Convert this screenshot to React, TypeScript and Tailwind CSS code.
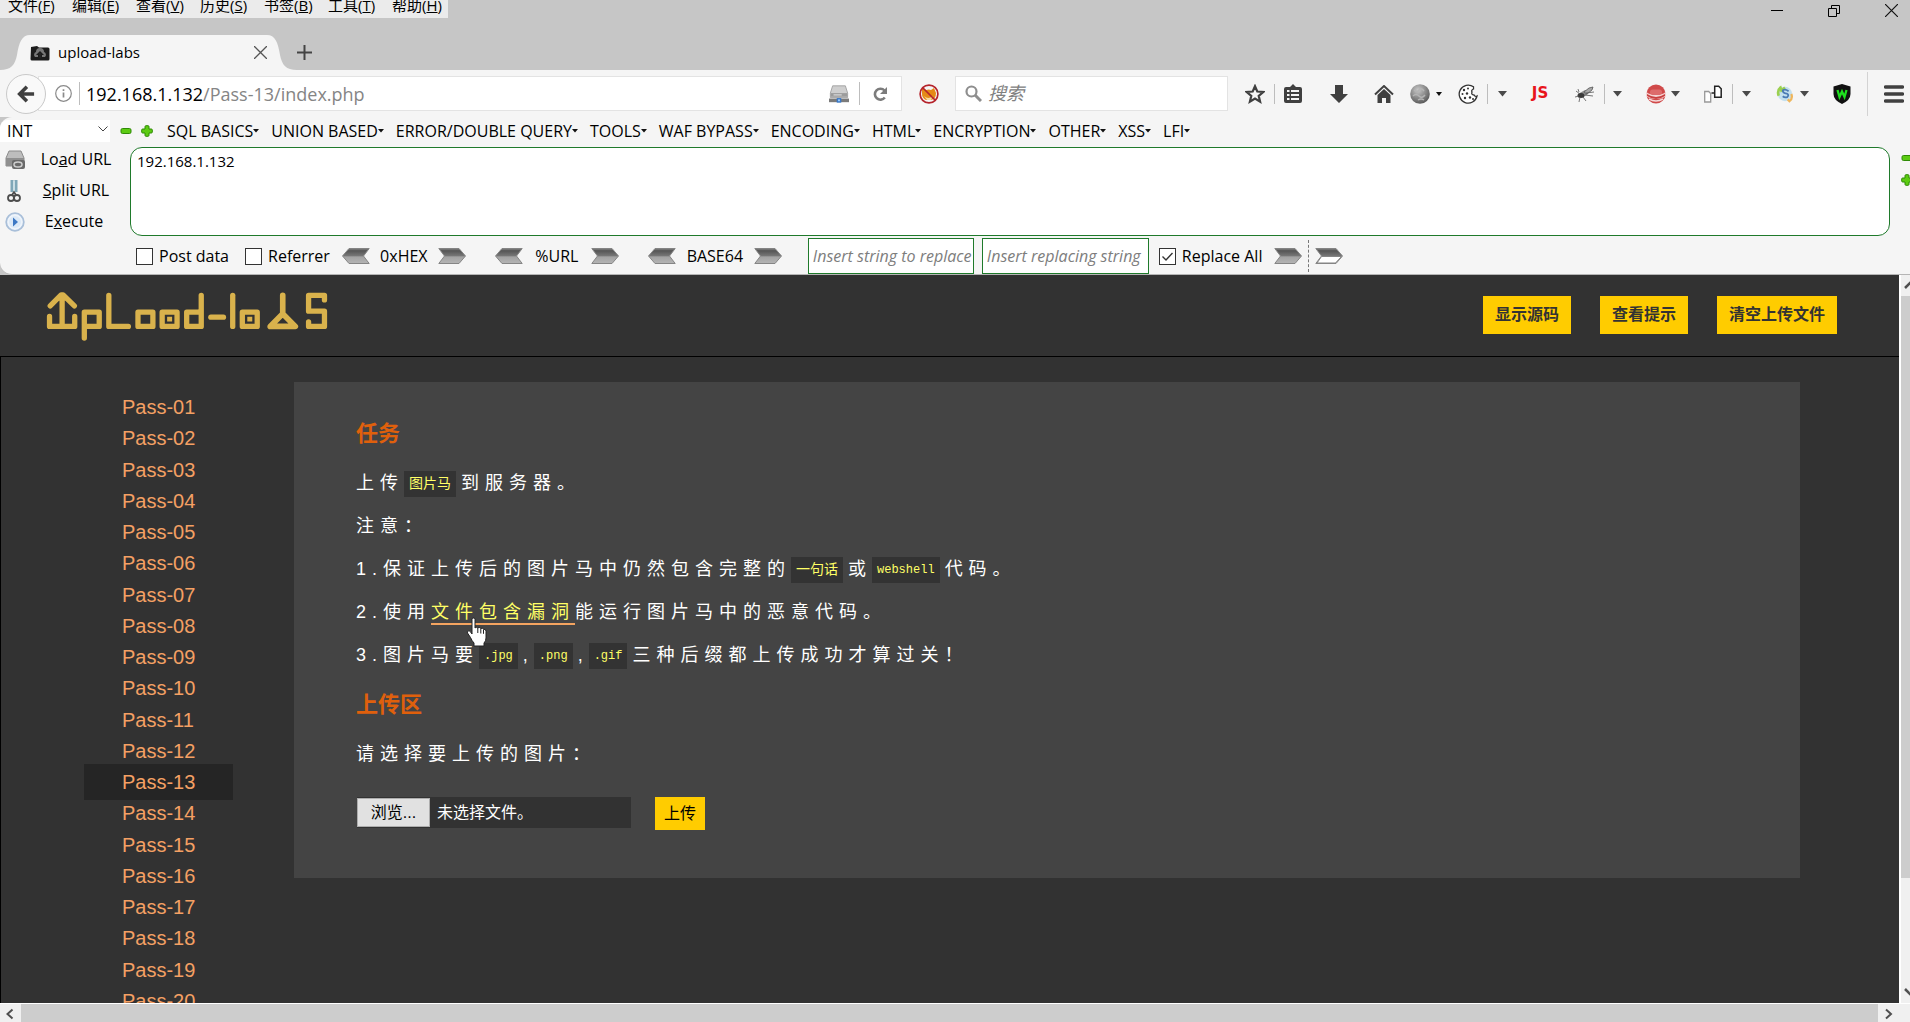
import React from 'react';
import { clsx } from 'clsx';

const browserMenu = [
  ['文件', 'F'],
  ['编辑', 'E'],
  ['查看', 'V'],
  ['历史', 'S'],
  ['书签', 'B'],
  ['工具', 'T'],
  ['帮助', 'H'],
];

const hackMenu = [
  'SQL BASICS',
  'UNION BASED',
  'ERROR/DOUBLE QUERY',
  'TOOLS',
  'WAF BYPASS',
  'ENCODING',
  'HTML',
  'ENCRYPTION',
  'OTHER',
  'XSS',
  'LFI',
];

const passes = Array.from({ length: 20 }, (_, i) => `Pass-${String(i + 1).padStart(2, '0')}`);

/* ---------- small shared bits ---------- */

function Caret({ className = '', small = false }: { className?: string; small?: boolean }) {
  return (
    <button className={clsx('shrink-0', className)} aria-label="More">
      <svg width="9" height="6" viewBox="0 0 9 6">
        <path d={small ? 'M2 1h6L5 5z' : 'M0 0h9L4.500 5.500z'} fill={small ? '#111' : '#4a4a4a'} />
      </svg>
    </button>
  );
}

function Sep({ className = '' }: { className?: string }) {
  return <span className={clsx('w-px shrink-0 bg-[#bdbdbd]', className)} />;
}

function Tool({ label, className, children }: { label: string; className: string; children: React.ReactNode }) {
  return (
    <button aria-label={label} className={clsx('flex shrink-0 items-center justify-center', className)}>
      {children}
    </button>
  );
}

function Minus() {
  return (
    <svg width="12" height="12" viewBox="0 0 12 12">
      <rect x="1" y="3.500" width="10" height="5" rx="1.500" fill="#5ccb12" stroke="#2f8a06" />
    </svg>
  );
}

function Plus() {
  return (
    <svg width="12" height="12" viewBox="0 0 12 12">
      <path
        d="M4 1.700q0-1 1-1h2q1 0 1 1V4h2.300q1 0 1 1v2q0 1-1 1H8v2.300q0 1-1 1H5q-1 0-1-1V8H1.700q-1 0-1-1V5q0-1 1-1H4z"
        fill="#5ccb12"
        stroke="#2f8a06"
      />
    </svg>
  );
}

function Ribbon({ flip = false, hollow = false, label }: { flip?: boolean; hollow?: boolean; label: string }) {
  return (
    <button aria-label={label} className="shrink-0">
      <svg width="28" height="16" viewBox="0 0 28 16" className={flip ? '-scale-x-100' : ''}>
        <defs>
          <linearGradient id="ribbon" x1="0" y1="0" x2="0" y2="1">
            <stop offset="0" stopColor="#8a8a8a" />
            <stop offset=".15" stopColor="#555" />
            <stop offset=".5" stopColor="#777" />
            <stop offset=".55" stopColor="#a2a2a2" />
            <stop offset="1" stopColor="#b4b4b4" />
          </linearGradient>
        </defs>
        <path d="M.800.500H21L27.500 8 21 15.500H.800L6.500 8z" fill="url(#ribbon)" stroke="#858585" />
        {hollow && <path d="M6.500 8.500h20L20.500 15H2z" fill="#fff" stroke="#858585" />}
      </svg>
    </button>
  );
}

/* ---------- browser chrome ---------- */

function TitleBar() {
  return (
    <div className="flex h-[70px] items-start justify-between bg-[#c6c6c6]">
      <div>
        <div className="flex h-[18px] items-center gap-4 bg-[#ebebeb] pr-2 pb-2 pl-2 leading-[18px]">
          {browserMenu.map(([name, key]) => (
            <button key={key} className="w-12 shrink-0 text-left text-[15px] whitespace-nowrap">
              {name}(<u>{key}</u>)
            </button>
          ))}
        </div>
        <div className="flex pt-[17px]">
          <svg width="30" height="35" viewBox="0 0 30 35" className="shrink-0">
            <path d="M0 35c11 0 15-5 17-15C19 7 22 0 30 0v35z" fill="#f5f5f5" />
          </svg>
          <div className="flex h-[35px] w-[237px] items-center bg-[#f5f5f5]">
            <svg width="20" height="16" viewBox="0 0 20 16">
              <path d="M1 2l6-1 2 1.500h9q1.500 0 1.500 1.500v10q0 1.500-1.500 1.500H2q-1.500 0-1.500-1.500z" fill="#1c1c1c" />
              <path d="M5 12a3 3 0 0 1 1-5 4 4 0 0 1 8 0 3 3 0 0 1 1 5h-3v-2h2l-4-4-4 4h2v2z" fill="#777" />
              <path d="M9 8h2v5H9z" fill="#222" />
            </svg>
            <span className="ml-2 flex-1 text-[15px]">upload-labs</span>
            <button aria-label="Close tab">
              <svg width="13" height="13" viewBox="0 0 13 13">
                <path d="M0 0l13 13M13 0L0 13" stroke="#555" strokeWidth="1.300" />
              </svg>
            </button>
          </div>
          <svg width="30" height="35" viewBox="0 0 30 35" className="shrink-0">
            <path d="M30 35c-11 0-15-5-17-15C11 7 8 0 0 0v35z" fill="#f5f5f5" />
          </svg>
          <button aria-label="New tab" className="flex h-[35px] items-center">
            <svg width="15" height="15" viewBox="0 0 15 15">
              <path d="M7.500 0v15M0 7.500h15" stroke="#444" strokeWidth="2" />
            </svg>
          </button>
        </div>
      </div>
      <div className="flex items-center gap-[45px] pt-1 pr-3">
        <button aria-label="Minimize">
          <svg width="12" height="12" viewBox="0 0 12 12">
            <path d="M0 5.500h12" stroke="#000" />
          </svg>
        </button>
        <button aria-label="Restore">
          <svg width="12" height="12" viewBox="0 0 12 12">
            <path d="M.5 3.500h8v8h-8zM3.500 3.500v-3h8v8h-3" fill="none" stroke="#000" />
          </svg>
        </button>
        <button aria-label="Close">
          <svg width="13" height="13" viewBox="0 0 13 13">
            <path d="M0 0l13 13M13 0L0 13" stroke="#111" strokeWidth="1.200" />
          </svg>
        </button>
      </div>
    </div>
  );
}

function NavBar() {
  return (
    <div className="flex h-[47px] items-center bg-[#f5f5f5] pr-[6px] pl-[6px]">
      <button
        aria-label="Back"
        className="z-10 flex size-10 shrink-0 items-center justify-center rounded-full border border-[#c9c9c9] bg-[#f9f9f9]"
      >
        <svg width="18" height="18" viewBox="0 0 20 20">
          <path d="M11 2L3 10l8 8M3.500 10H19" fill="none" stroke="#404040" strokeWidth="4" />
        </svg>
      </button>
      <div className="-ml-2 flex h-[35px] flex-1 items-center border border-[#e3e3e3] bg-white pr-3 pl-4">
        <svg width="17" height="17" viewBox="0 0 17 17" className="shrink-0">
          <circle cx="8.500" cy="8.500" r="7.800" fill="none" stroke="#8a8a8a" strokeWidth="1.200" />
          <path d="M8.500 7.500v5M8.500 4.200v1.800" stroke="#8a8a8a" strokeWidth="1.700" />
        </svg>
        <Sep className="ml-[7px] h-[23px]" />
        <div className="ml-[6px] flex-1 text-[18px] leading-6">
          192.168.1.132<span className="text-[#858585]">/Pass-13/index.php</span>
        </div>
        <svg width="20" height="20" viewBox="0 0 22 20">
          <path d="M4 1h14l2.500 8v5h-19V9z" fill="#cfcfcf" stroke="#a0a0a0" />
          <path d="M2 9h18v4H2z" fill="#9c9c9c" />
          <path d="M5 11h9" stroke="#eee" />
          <path d="M0 17h22" stroke="#7b7b7b" strokeWidth="4" />
          <path d="M8.500 17h5" stroke="#3a78c8" strokeWidth="5" />
          <circle cx="11" cy="17" r="1.200" fill="#9fd0ff" />
        </svg>
        <Sep className="ml-[10px] h-[23px]" />
        <button aria-label="Reload" className="ml-3">
          <svg width="17" height="16" viewBox="0 0 17 16">
            <path d="M12.800 11.500A5.500 5.500 0 1 1 12.500 4.500" fill="none" stroke="#7c7c7c" strokeWidth="2.600" />
            <path d="M15 1v7H8z" fill="#7c7c7c" />
          </svg>
        </button>
      </div>
      <Tool label="Proxy" className="ml-[17px] w-5">
        <svg width="20" height="20" viewBox="0 0 20 20">
          <path d="M3 4l4 2q3-1 5 0l3-2 2 5q0 6-5 7H7Q3 14 3 10z" fill="#e58a17" />
          <path d="M5 12q4 4 9 0l-2 4H8z" fill="#f7d9a0" />
          <circle cx="10" cy="10" r="8.900" fill="none" stroke="#b5232b" strokeWidth="1.700" />
          <path d="M4 4l12 12" stroke="#b5232b" strokeWidth="1.700" />
        </svg>
      </Tool>
      <div className="ml-4 flex h-[35px] w-[273px] items-center border border-[#e3e3e3] bg-white pl-[9px]">
        <svg width="17" height="17" viewBox="0 0 17 17" className="shrink-0">
          <circle cx="6.500" cy="6.500" r="5" fill="none" stroke="#8e8e8e" strokeWidth="2.200" />
          <path d="M10 10l6 6" stroke="#8e8e8e" strokeWidth="3" />
        </svg>
        <input
          aria-label="搜索"
          placeholder="搜索"
          className="ml-[6px] w-full bg-transparent text-[18px] italic outline-none placeholder:text-[#808080]"
        />
      </div>

      <Tool label="Bookmark" className="ml-[17px] w-5">
        <svg width="20" height="20" viewBox="0 0 20 20">
          <path
            d="M10 2.200l2.300 5.300 5.900.5-4.500 3.800 1.400 5.800-5.100-3.100-5.100 3.100 1.400-5.800L1.800 8l5.900-.5z"
            fill="none"
            stroke="#404040"
            strokeWidth="2.200"
          />
        </svg>
      </Tool>
      <Sep className="ml-[9px] h-5" />
      <Tool label="Library" className="ml-[9px] w-[18px]">
        <svg width="18" height="19" viewBox="0 0 18 19">
          <path d="M9 0l3 3h4q2 0 2 2v12q0 2-2 2H2q-2 0-2-2V5q0-2 2-2h4z" fill="#404040" />
          <path d="M3 7h2.500M7 7h8M3 11h2.500M7 11h8M3 15h2.500M7 15h8" stroke="#f5f5f5" strokeWidth="1.800" />
        </svg>
      </Tool>
      <Tool label="Downloads" className="ml-7 w-[18px]">
        <svg width="18" height="18" viewBox="0 0 18 18">
          <path d="M5 0h8v9h5l-9 9-9-9h5z" fill="#404040" />
        </svg>
      </Tool>
      <Tool label="Home" className="ml-[26px] w-5">
        <svg width="20" height="18" viewBox="0 0 20 18">
          <path d="M1 9.500L10 1l9 8.500" fill="none" stroke="#404040" strokeWidth="2" />
          <path d="M10 4l6.500 6v8H12v-5H8v5H3.500v-8z" fill="#404040" />
        </svg>
      </Tool>
      <Tool label="Globe" className="ml-4 w-5">
        <svg width="20" height="20" viewBox="0 0 20 20">
          <defs>
            <radialGradient id="ball" cx=".4" cy=".3" r=".8">
              <stop offset="0" stopColor="#c8c8c8" />
              <stop offset="1" stopColor="#4c4c4c" />
            </radialGradient>
          </defs>
          <circle cx="10" cy="10" r="9.800" fill="url(#ball)" />
          <path d="M4 6q3 3 5 0t5 1M3 12q3-3 6 0t6-1M8 16q3-2 6 0" fill="none" stroke="#b4b4b4" strokeWidth="1.500" />
        </svg>
      </Tool>
      <Caret small className="ml-1" />
      <Tool label="Cookies" className="ml-[15px] w-5">
        <svg width="20" height="20" viewBox="0 0 20 20">
          <path
            d="M15.500 2.800A9 9 0 1 0 19 12q-2 1-3-1-3 0-2-3-1-2 1.500-3z"
            fill="#fff"
            stroke="#333"
            strokeWidth="1.300"
          />
          <g fill="#333">
            <circle cx="6" cy="6" r="1.200" />
            <circle cx="10" cy="4.500" r="1" />
            <circle cx="4.500" cy="10" r="1" />
            <circle cx="9" cy="9.500" r="1.200" />
            <circle cx="7" cy="14" r="1.200" />
            <circle cx="12" cy="13.500" r="1.200" />
            <circle cx="15" cy="15" r="1" />
          </g>
        </svg>
      </Tool>
      <Sep className="ml-[9px] h-5" />
      <Caret className="ml-[10px]" />
      <button className="ml-[21px] w-6 shrink-0 text-center font-['DejaVu_Sans',sans-serif] text-[15px] font-bold text-[#e8141c]">
        JS
      </button>
      <Tool label="Firebug" className="ml-[23px] w-5">
        <svg width="20" height="18" viewBox="0 0 20 18">
          <path d="M3 9l7-4 4 1-2 4-5 2z" fill="#8a8a8a" />
          <path d="M9 7l5-4 4-1-1 3-5 4z" fill="#a8a8a8" stroke="#555" strokeWidth=".8" />
          <ellipse cx="6" cy="10.500" rx="3.500" ry="2.500" fill="#3a3a3a" />
          <path d="M1 6l4 3M0 12l4-1M5 12l-1 5M8 12l3 4M10 10l8 1M11 8l8-1M4 7L3 4" stroke="#555" strokeWidth=".8" />
        </svg>
      </Tool>
      <Sep className="ml-[9px] h-5" />
      <Caret className="ml-2" />
      <Tool label="Blocker" className="ml-6 w-5">
        <svg width="20" height="20" viewBox="0 0 20 20">
          <circle cx="10" cy="10" r="9.500" fill="#d04a4a" />
          <path d="M0 7.500q2 2 4 2.500h12q2-.5 4-2.500v5q-10 5-20 0z" fill="#f3d3d3" />
          <path d="M1 10q9 6 18 0v2q-9 6-18 0z" fill="#c94040" />
          <rect x="4" y="5.500" width="12" height="5.500" rx="2.500" fill="#dd6b6b" />
          <path d="M3 15q7 4 14 0" fill="none" stroke="#f5dada" strokeWidth="1.600" />
        </svg>
      </Tool>
      <Caret className="ml-[5px]" />
      <Tool label="Switch proxy" className="ml-6 w-[18px]">
        <svg width="18" height="18" viewBox="0 0 18 18">
          <path d="M.7 6.500h4l2 2v8.500h-6z" fill="#fff" stroke="#999" strokeWidth="1.300" />
          <path d="M10.700 1.200h4l2.500 2.500v8.500h-6.500zM7.500 8h3" fill="#fff" stroke="#222" strokeWidth="1.500" />
        </svg>
      </Tool>
      <Sep className="ml-[10px] h-5" />
      <Caret className="ml-[9px]" />
      <Tool label="Sync" className="ml-6 w-5">
        <svg width="18" height="20" viewBox="0 0 20 20">
          <circle cx="10" cy="10" r="8" fill="#c3e0ef" />
          <path d="M3 12Q1 6 5 3l1 3 4-3" fill="none" stroke="#9bd04f" strokeWidth="3" />
          <path d="M14 7q-4-3-6.500-1 0 3 4.500 3.500 3 1.500.5 4-3 1-5-1" fill="none" stroke="#4a7ab4" strokeWidth="2" />
          <path d="M17 10q2 5-2 8l-2-2" fill="none" stroke="#efb65c" strokeWidth="2.500" />
        </svg>
      </Tool>
      <Caret className="ml-[5px]" />
      <Tool label="Shield" className="ml-6 w-[18px]">
        <svg width="18" height="20" viewBox="0 0 18 20">
          <path d="M9 0l8.500 2.500V10q0 6-8.500 10Q.5 16 .5 10V2.500z" fill="#111" />
          <path d="M4.500 6l2 7L9 7.500l2.500 5.500 2-7" fill="none" stroke="#1ee01e" strokeWidth="2.300" />
        </svg>
      </Tool>
      <Sep className="ml-4 h-11 opacity-60" />
      <Tool label="Menu" className="ml-4 w-5">
        <svg width="20" height="18" viewBox="0 0 20 18">
          <path d="M1.500 2h17M1.500 9h17M1.500 16h17" stroke="#404040" strokeWidth="3.400" strokeLinecap="round" />
        </svg>
      </Tool>
    </div>
  );
}

function UrlActions() {
  return (
    <div className="flex w-[130px] shrink-0 flex-col leading-[29px]">
      <button className="flex h-[31px] items-start pl-[5px]">
        <svg width="20" height="20" viewBox="0 0 20 20" className="mt-[5px]">
          <path d="M4 1h12l3 7v8H1V8z" fill="#bdbdbd" stroke="#8b8b8b" />
          <path d="M1 8h18v8H1z" fill="#8f8f8f" />
          <rect x="7" y="10" width="13" height="9" rx="2" fill="#6a6a6a" />
          <ellipse cx="13" cy="14.500" rx="4" ry="2.500" fill="none" stroke="#d0d0d0" strokeWidth="1.500" />
        </svg>
        <span className="w-[102px] text-center">
          Lo<u>a</u>d URL
        </span>
      </button>
      <button className="flex h-[31px] items-start pl-[5px]">
        <svg width="20" height="24" viewBox="0 0 20 24" className="mt-[3px]">
          <path d="M7 1v12M11 1v12" stroke="#7fa7b8" strokeWidth="3" />
          <path d="M9 2v12" stroke="#cfe3ea" strokeWidth="1.500" />
          <circle cx="6" cy="19" r="3" fill="none" stroke="#4d4d4d" strokeWidth="1.800" />
          <circle cx="12" cy="19" r="3" fill="none" stroke="#4d4d4d" strokeWidth="1.800" />
          <path d="M7 16l2-3 2 3" fill="none" stroke="#4d4d4d" strokeWidth="1.800" />
        </svg>
        <span className="w-[102px] text-center">
          <u>S</u>plit URL
        </span>
      </button>
      <button className="flex h-[31px] items-start pl-[5px]">
        <svg width="20" height="20" viewBox="0 0 20 20" className="mt-[5px]">
          <circle cx="10" cy="10" r="8.800" fill="#eef4fb" stroke="#a9bfd9" strokeWidth="1.800" />
          <circle cx="10" cy="10" r="6" fill="#dce9f7" />
          <path d="M8 5.500l5 4.500-5 4.500z" fill="#3d78c4" />
        </svg>
        <span className="w-[98px] text-center">
          E<u>x</u>ecute
        </span>
      </button>
    </div>
  );
}

function Check({ id, label, checked = false }: { id: string; label: string; checked?: boolean }) {
  return (
    <div className="relative flex items-center">
      <input
        id={id}
        type="checkbox"
        defaultChecked={checked}
        className="peer size-[17px] appearance-none border border-[#333] bg-white"
      />
      <svg
        width="17"
        height="17"
        viewBox="0 0 17 17"
        className="pointer-events-none absolute left-0 hidden peer-checked:block"
      >
        <path d="M3.500 8.500l3.500 3.500 6.500-7" fill="none" stroke="#333" strokeWidth="1.400" />
      </svg>
      <label htmlFor={id} className="ml-[6px] whitespace-nowrap">
        {label}
      </label>
    </div>
  );
}

function Encoder({ name, width }: { name: string; width: string }) {
  return (
    <div className={clsx('flex shrink-0 items-center justify-between', width)}>
      <Ribbon flip label={`${name} decode`} />
      <span>{name}</span>
      <Ribbon label={`${name} encode`} />
    </div>
  );
}

function HackBar() {
  return (
    <div className="bg-[#c6c6c6]">
      <div className="rounded-l-xl border-b border-[#b5b5b5] bg-[#f5f5f5] text-base">
        <div className="flex h-7 items-center">
          <div className="relative w-[110px] shrink-0">
            <select
              aria-label="Injection type"
              className="h-[22px] w-full appearance-none rounded-tl-lg bg-white pl-[7px] leading-[22px] outline-none"
            >
              <option>INT</option>
            </select>
            <svg width="10" height="6" viewBox="0 0 10 6" className="pointer-events-none absolute top-[7px] right-[2px]">
              <path d="M.5.5L5 5 9.500.5" fill="none" stroke="#444" />
            </svg>
          </div>
          <button aria-label="Remove" className="ml-[10px]">
            <Minus />
          </button>
          <button aria-label="Add" className="ml-[9px]">
            <Plus />
          </button>
          <div className="ml-[14px] flex gap-3">
            {hackMenu.map((item) => (
              <button key={item} className="flex items-center whitespace-nowrap">
                {item}
                <svg width="6" height="4" viewBox="0 0 6 4">
                  <path d="M0 0h6L3 3.500z" fill="#111" />
                </svg>
              </button>
            ))}
          </div>
        </div>
        <div className="flex">
          <UrlActions />
          <textarea
            aria-label="URL"
            defaultValue="192.168.1.132"
            className="mt-[2px] h-[89px] flex-1 resize-none rounded-xl border border-[#1f7a2b] bg-white px-[6px] pt-[3px] text-[15px] leading-5 outline-none"
          />
          <div className="flex w-5 shrink-0 flex-col gap-[10px] overflow-hidden pt-[7px] pl-[11px]">
            <button aria-label="Shrink" className="w-3">
              <Minus />
            </button>
            <button aria-label="Grow" className="w-3">
              <Plus />
            </button>
          </div>
        </div>
        <div className="flex h-9 items-center pl-[136px] leading-5">
          <Check id="post" label="Post data" />
          <div className="ml-4">
            <Check id="referrer" label="Referrer" />
          </div>
          <div className="ml-3 flex gap-[29px]">
            <Encoder name="0xHEX" width="w-[124px]" />
            <Encoder name="%URL" width="w-[124px]" />
            <Encoder name="BASE64" width="w-[134px]" />
          </div>
          <input
            aria-label="Insert string to replace"
            placeholder="Insert string to replace"
            className="ml-[26px] h-9 w-[166px] border border-[#1f7a2b] bg-white pl-1 italic outline-none placeholder:text-[#7d7d7d]"
          />
          <input
            aria-label="Insert replacing string"
            placeholder="Insert replacing string"
            className="mr-[10px] ml-2 h-9 w-[167px] border border-[#1f7a2b] bg-white pl-1 italic outline-none placeholder:text-[#7d7d7d]"
          />
          <Check id="replace-all" label="Replace All" checked />
          <div className="ml-3 flex items-center">
            <Ribbon label="Replace" />
            <span className="mx-[6px] h-8 border-l border-dashed border-[#777]" />
            <Ribbon hollow label="Replace and go" />
          </div>
        </div>
      </div>
    </div>
  );
}

/* ---------- page ---------- */

function Logo() {
  return (
    <svg width="285" height="53" viewBox="135 60 855 160" role="img" aria-label="upload-labs">
      <g fill="none" stroke="#d9b24c" strokeWidth="16" strokeLinejoin="round" strokeLinecap="round">
        <path d="M148 108l33-33h6l34 33M184 76v92M146 140v30h76v-30" />
        <path d="M251 205v-78h45v43h-38" />
        <path d="M325 76v94h59" />
        <path d="M413 127h45v43h-45z" />
        <path d="M486 127h45v43h-45z" />
        <path d="M604 76v94h-44v-43h36" />
        <path d="M633 142h38" />
        <path d="M699 76v94" />
        <path d="M728 127h45v43h-45z" />
        <path d="M850 76v56l38 38h-76l38-38" strokeWidth="17" />
        <path d="M976 90V76h-48v48h48v46h-48v-14" />
      </g>
      <path d="M184 68l20 24h-40zM501 141h15v14h-15zM743 141h15v14h-15z" fill="#d9b24c" />
    </svg>
  );
}

function Code({ children, latin = false }: { children: React.ReactNode; latin?: boolean }) {
  return (
    <code
      className={clsx(
        "mt-px mr-[5px] inline-block h-[26px] bg-[#333] px-[5px] align-top font-['Liberation_Mono','Noto_Sans_CJK_SC',monospace] leading-[26px] tracking-normal text-[#ffff66]",
        latin ? 'text-[12px]' : 'text-[14px]'
      )}
    >
      {children}
    </code>
  );
}

function HandCursor() {
  return (
    <svg width="22" height="30" viewBox="0 0 22 30" className="pointer-events-none absolute top-[15px] left-[35px]">
      <path
        d="M6 2.500Q6 1 7.500 1T9 2.500V11q1-1.500 2.800-.2 1.700-1 2.900.7 1.900-.9 2.800.8 2.500-.5 2.500 2V21q0 3-2 5v3H8v-3q-2-2-3.500-5.500L1.500 16q-.8-1.500.5-2t2.500.8L6 17z"
        fill="#fff"
        stroke="#222"
      />
      <path d="M11.800 11v5M14.800 12v4.500M17.500 12.800v4" stroke="#222" />
    </svg>
  );
}

function Header() {
  return (
    <header className="flex h-[82px] shrink-0 items-start justify-between border-b border-black pr-[62px] pl-[45px]">
      <div className="pt-[15px]">
        <Logo />
      </div>
      <div className="flex gap-[29px] pt-[21px]">
        {['显示源码', '查看提示', '清空上传文件'].map((text) => (
          <button key={text} className="h-[38px] bg-[#fc0] px-3 text-base font-bold text-[#333]">
            {text}
          </button>
        ))}
      </div>
    </header>
  );
}

function PassList() {
  return (
    <nav className="w-[293px] shrink-0 pt-[35px]">
      <ul className="grid h-[625px] auto-rows-fr font-['Liberation_Sans',Arial,sans-serif] text-xl leading-[31px] text-[#f4a064]">
        {passes.map((pass) => (
          <li key={pass} className="pl-[83px]">
            <a href={`#${pass}`} className={clsx('px-[38px] py-[7px]', pass === 'Pass-13' && 'bg-[#252525]')}>
              {pass}
            </a>
          </li>
        ))}
      </ul>
    </nav>
  );
}

function Task() {
  return (
    <section className="mt-[25px] mr-[99px] min-w-0 flex-1 self-start bg-[#444] px-[62px] pt-[37px] pb-12 text-white">
      <h3 className="mb-[21px] text-[22px] leading-[30px] font-bold text-[#e0600c]">任务</h3>
      <div className="mb-[21px] flex flex-col gap-4 text-[18px] leading-[27px] tracking-[6px]">
        <p>
          上传<Code>图片马</Code>到服务器。
        </p>
        <p>注意：</p>
        <p>
          1.保证上传后的图片马中仍然包含完整的<Code>一句话</Code>或<Code latin>webshell</Code>代码。
        </p>
        <p>
          2.使用
          <a
            href="#include"
            className="relative text-[#ffff66] underline decoration-[#f4a460] decoration-2 underline-offset-[5px]"
          >
            文件包含漏洞
            <HandCursor />
          </a>
          能运行图片马中的恶意代码。
        </p>
        <p>
          3.图片马要<Code latin>.jpg</Code>,<Code latin>.png</Code>,<Code latin>.gif</Code>三种后缀都上传成功才算过关！
        </p>
      </div>
      <h3 className="mb-[21px] text-[22px] leading-[30px] font-bold text-[#e0600c]">上传区</h3>
      <p className="text-[18px] leading-[27px] tracking-[6px]">请选择要上传的图片：</p>
      <form className="mt-[29px] flex items-start pl-px" onSubmit={(e) => e.preventDefault()}>
        <label htmlFor="upload_file" className="flex h-[31px] w-[274px] items-stretch bg-[#323232] text-base">
          <span className="my-px flex w-[73px] items-center justify-center border border-[#adadad] bg-[#e1e1e1] text-black">
            浏览...
          </span>
          <span className="ml-[7px] self-center">未选择文件。</span>
          <input id="upload_file" type="file" className="sr-only" />
        </label>
        <button className="ml-6 h-[33px] w-[50px] bg-[#fc0] text-base text-black">上传</button>
      </form>
    </section>
  );
}

function VScroll() {
  return (
    <div className="flex w-[11px] shrink-0 flex-col overflow-hidden border-l-2 border-white bg-[#f0f0f0]">
      <svg width="9" height="21" viewBox="0 0 9 21">
        <path d="M4 13l6-6" stroke="#505050" strokeWidth="2.500" />
      </svg>
      <div className="h-[80%] bg-[#cdcdcd]" />
      <svg width="9" height="21" viewBox="0 0 9 21" className="mt-auto">
        <path d="M4 7l6 6" stroke="#505050" strokeWidth="2.500" />
      </svg>
    </div>
  );
}

function HScroll() {
  return (
    <div className="flex h-[19px] shrink-0 border-t border-white bg-[#f0f0f0]">
      <svg width="21" height="19" viewBox="0 0 21 19">
        <path d="M12.500 5.500l-5 4.500 5 4.500" fill="none" stroke="#505050" strokeWidth="2" />
      </svg>
      <div className="flex-1 bg-[#cdcdcd]" />
      <svg width="21" height="19" viewBox="0 0 21 19" className="mr-[11px]">
        <path d="M8 5.500l5 4.500-5 4.500" fill="none" stroke="#505050" strokeWidth="2" />
      </svg>
    </div>
  );
}

export default function App() {
  return (
    <div className="flex h-screen flex-col overflow-hidden font-['Open_Sans','Noto_Sans_CJK_SC',sans-serif] text-black">
      <TitleBar />
      <NavBar />
      <HackBar />
      <div className="flex min-h-0 flex-1">
        <div className="flex min-w-0 flex-1 flex-col overflow-hidden bg-[#323232] font-['Liberation_Sans','Noto_Sans_CJK_SC',sans-serif]">
          <Header />
          <main className="flex min-h-0 flex-1 overflow-hidden border-l border-black">
            <PassList />
            <Task />
          </main>
        </div>
        <VScroll />
      </div>
      <HScroll />
    </div>
  );
}
